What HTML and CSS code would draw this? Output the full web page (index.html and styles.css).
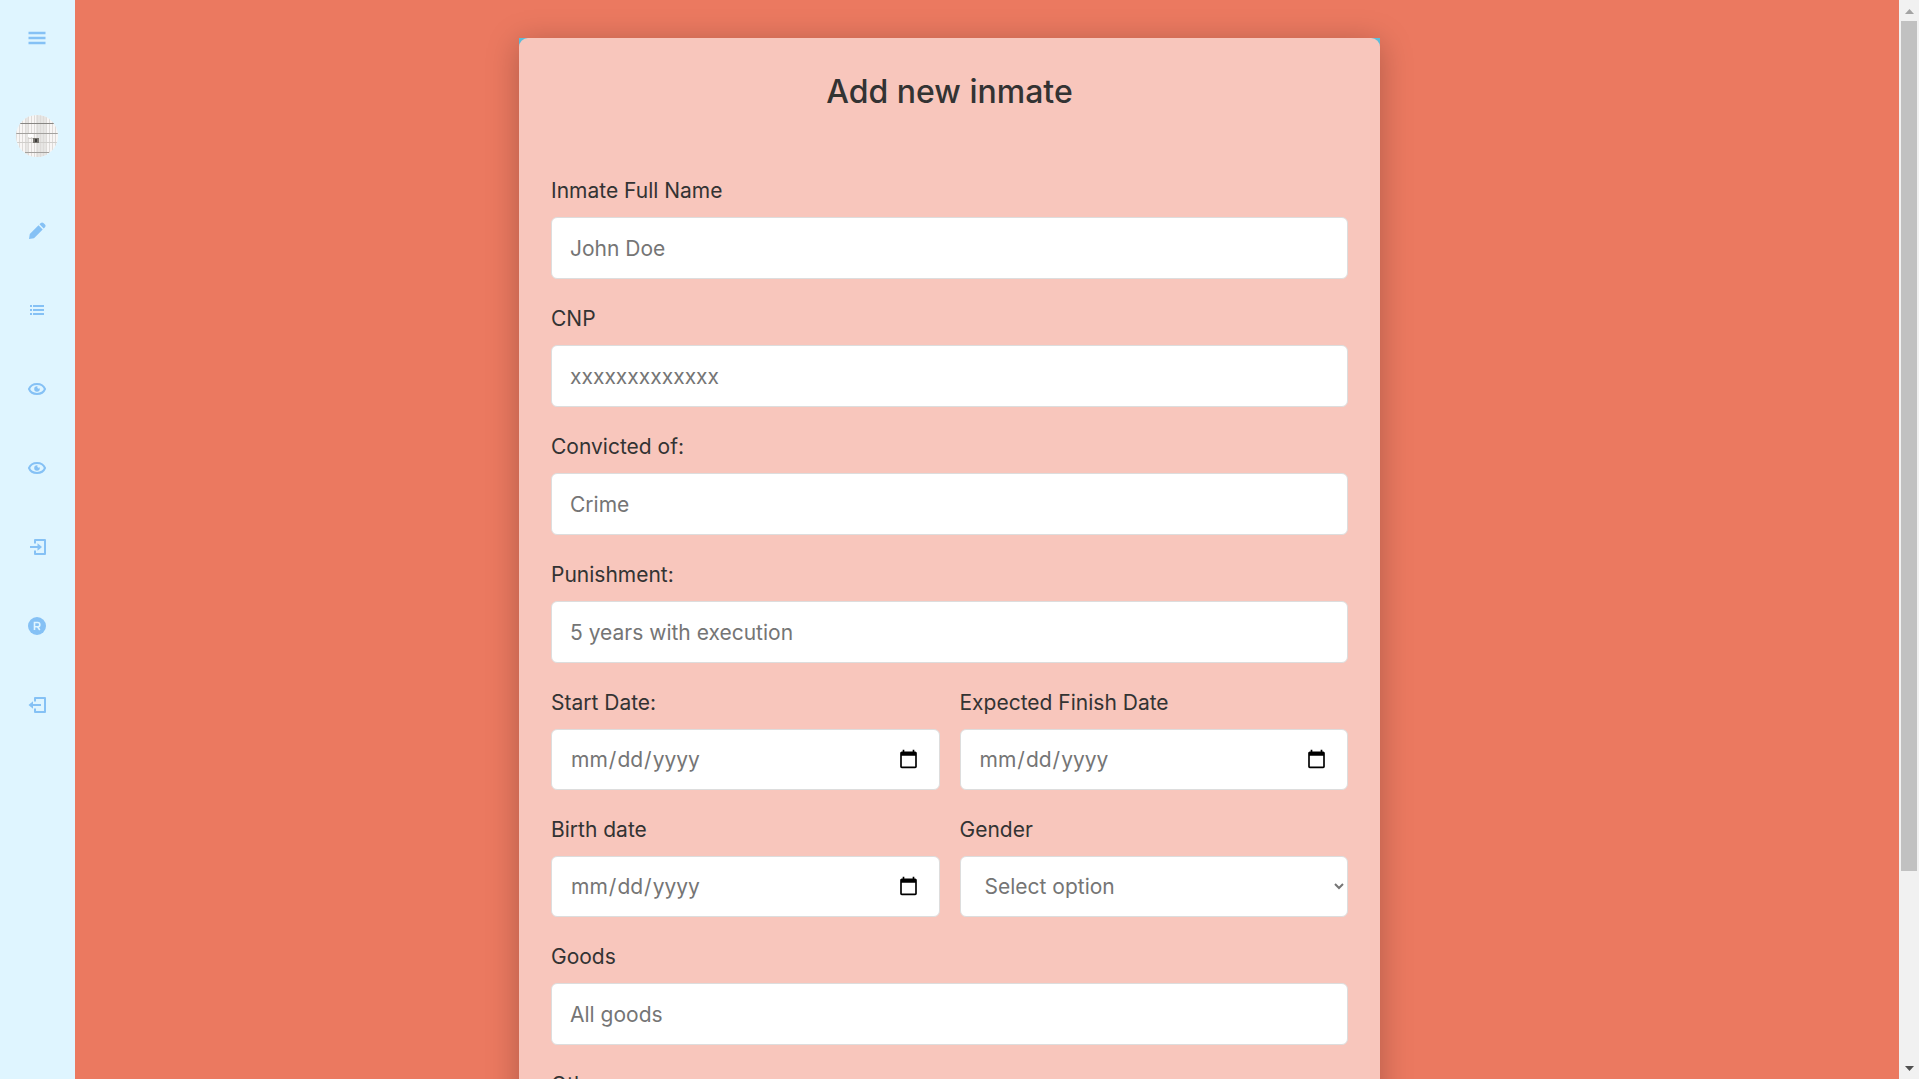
FILE: index.html
```html
<!DOCTYPE html>
<html lang="en-US">
<head>
<meta charset="utf-8">
<meta name="viewport" content="width=device-width, initial-scale=1">
<title>Add new inmate</title>
<link rel="stylesheet" href="styles.css">
</head>
<body>
<aside class="sidebar">
  <button class="icon-button" type="button" aria-label="Menu">
    <svg class="icon" viewBox="0 0 20 20"><path d="M1.5 5h17M1.500 10h17M1.500 15h17" fill="none" stroke="currentColor" stroke-width="2.500"/></svg>
  </button>
  <svg class="avatar" viewBox="0 0 42 42" role="img" aria-label="Profile picture">
    <defs>
      <clipPath id="round"><circle cx="21" cy="21" r="21"/></clipPath>
      <pattern id="bars" width="3" height="42" patternUnits="userSpaceOnUse"><path d="M.5 0v42" stroke="#dedbd9"/></pattern>
    </defs>
    <g clip-path="url(#round)">
      <path fill="#f8f6f5" d="M0 0h42v42H0z"/>
      <path fill="#e6e5e3" d="M10 0h3v42h-3zM20 0h11v42H20z"/>
      <path fill="url(#bars)" d="M0 0h42v42H0z"/>
      <path stroke="#888683" d="M0 8.500h42"/>
      <path stroke="#a3a19e" d="M0 18.500h42M9 37.500h24"/>
      <path stroke="#d0cecb" d="M0 27.500h42M12 23.500h6"/>
      <path fill="#fff" d="M12 19h5v3h-5z"/>
      <path fill="#77746f" d="M17 23h6v5h-6z"/>
      <path fill="#3d3b39" d="M19 24h2v3h-2z"/>
    </g>
  </svg>
  <nav class="nav">
    <a class="nav-link" href="#add" aria-label="Add inmate">
      <svg class="icon" viewBox="0 0 20 20"><path fill="currentColor" d="M2 18l.8-5L11.500 4.300l4.200 4.200L7 17.200zM12.500 3.300l1.300-1.300c.8-.8 1.800-.8 2.600 0l1.600 1.600c.8.800.8 1.800 0 2.600l-1.300 1.300z"/></svg>
    </a>
    <a class="nav-link" href="#list" aria-label="Inmate list">
      <svg class="icon" viewBox="0 0 20 20"><path fill="none" stroke="currentColor" stroke-width="2" d="M3 6h2M6 6h11M3 10h2M6 10h11M3 14h2M6 14h11"/></svg>
    </a>
    <a class="nav-link" href="#visits" aria-label="Visits">
      <svg class="icon" viewBox="0 0 20 20"><path fill="none" stroke="currentColor" stroke-width="2" d="M2 10c1.300-3.200 4.300-5 8-5s6.700 1.800 8 5c-1.300 3.200-4.300 5-8 5s-6.700-1.800-8-5z"/><path fill="currentColor" d="M10 7.200a2.800 2.800 0 1 0 2.800 2.800c0-.3 0-.5-.1-.7-.9.900-2.400.3-2.400-1 0-.4.100-.7.300-1-.2-.1-.4-.1-.6-.1z"/></svg>
    </a>
    <a class="nav-link" href="#visitors" aria-label="Visitors">
      <svg class="icon" viewBox="0 0 20 20"><path fill="none" stroke="currentColor" stroke-width="2" d="M2 10c1.300-3.200 4.300-5 8-5s6.700 1.800 8 5c-1.300 3.200-4.300 5-8 5s-6.700-1.800-8-5z"/><path fill="currentColor" d="M10 7.200a2.800 2.800 0 1 0 2.800 2.800c0-.3 0-.5-.1-.7-.9.900-2.400.3-2.400-1 0-.4.100-.7.300-1-.2-.1-.4-.1-.6-.1z"/></svg>
    </a>
    <a class="nav-link" href="#login" aria-label="Log in">
      <svg class="icon" viewBox="0 0 20 20"><path fill="none" stroke="currentColor" stroke-width="2" stroke-linejoin="round" d="M8 6.500V3h10v14H8v-3.500M3 10h9"/><path fill="currentColor" d="M10.500 6.200l4.500 3.800-4.500 3.800z"/></svg>
    </a>
    <a class="nav-link" href="#register" aria-label="Register">
      <svg class="icon" viewBox="0 0 20 20"><circle cx="10" cy="10" r="9" fill="currentColor"/><path fill="none" stroke="#dff5ff" stroke-width="1.600" d="M7.500 14V6.500h3.200a2 2 0 0 1 0 4.300H7.500M10.500 10.800l2.300 3.200"/></svg>
    </a>
    <a class="nav-link" href="#logout" aria-label="Log out">
      <svg class="icon" viewBox="0 0 20 20"><path fill="none" stroke="currentColor" stroke-width="2" stroke-linejoin="round" d="M8 6.500V3h10v14H8v-3.500M5 10h9"/><path fill="currentColor" d="M6 6.200L1.500 10 6 13.800z"/></svg>
    </a>
  </nav>
</aside>

<main class="content">
  <section class="card">
    <form class="form">
      <h1 class="title">Add new inmate</h1>
      <div class="field">
        <label class="label" for="name">Inmate Full Name</label>
        <input class="control" id="name" type="text" placeholder="John Doe">
      </div>
      <div class="field">
        <label class="label" for="cnp">CNP</label>
        <input class="control" id="cnp" type="text" placeholder="xxxxxxxxxxxxx">
      </div>
      <div class="field">
        <label class="label" for="crime">Convicted of:</label>
        <input class="control" id="crime" type="text" placeholder="Crime">
      </div>
      <div class="field">
        <label class="label" for="punishment">Punishment:</label>
        <input class="control" id="punishment" type="text" placeholder="5 years with execution">
      </div>
      <div class="pair">
        <div class="field">
          <label class="label" for="start">Start Date:</label>
          <input class="control control-picker" id="start" type="date">
        </div>
        <div class="field">
          <label class="label" for="finish">Expected Finish Date</label>
          <input class="control control-picker" id="finish" type="date">
        </div>
      </div>
      <div class="pair">
        <div class="field">
          <label class="label" for="birth">Birth date</label>
          <input class="control control-picker" id="birth" type="date">
        </div>
        <div class="field">
          <label class="label" for="gender">Gender</label>
          <select class="control control-picker control-select" id="gender">
            <option>Select option</option>
          </select>
        </div>
      </div>
      <div class="field">
        <label class="label" for="goods">Goods</label>
        <input class="control" id="goods" type="text" placeholder="All goods">
      </div>
      <div class="field">
        <label class="label" for="others">Others</label>
        <input class="control" id="others" type="text">
      </div>
    </form>
  </section>
</main>

<div class="scrollbar" aria-hidden="true">
  <svg class="scroll-arrow" viewBox="0 0 20 21"><path fill="#a3a3a3" d="M6 14l4.500-5 4.500 5z"/></svg>
  <div class="scroll-track"><div class="scroll-thumb"></div></div>
  <svg class="scroll-arrow" viewBox="0 0 20 21"><path fill="#505050" d="M6 8l4.500 5L15 8z"/></svg>
</div>
</body>
</html>
```
FILE: styles.css
```css
*,
*::before,
*::after {
  box-sizing: border-box;
}

body {
  margin: 0;
  height: 100vh;
  display: grid;
  grid-template-columns: 75px minmax(0, 1fr) 20px;
  overflow: hidden;
  background: #eb7960;
  color: #333;
  font-family: Inter, "Open Sans", sans-serif;
  font-size: 21px;
  line-height: 30px;
}

.sidebar {
  display: flex;
  flex-direction: column;
  align-items: center;
  padding: 28px 1px 0 0;
  background: #dff5ff;
  color: #85c1f5;
}

.icon-button {
  display: flex;
  padding: 0;
  border: 0;
  background: none;
  color: inherit;
}

.icon {
  display: block;
  width: 20px;
  height: 20px;
}

.avatar {
  width: 42px;
  height: 42px;
  margin: 67px 0 64px;
}

.nav {
  display: flex;
  flex-direction: column;
  gap: 59px;
}

.nav-link {
  color: inherit;
}

/* The right padding mirrors the sidebar, so the card is centred in the window. */
.content {
  min-height: 0;
  padding: 38px 75px 38px 0;
  overflow-y: auto;
  scrollbar-width: none;
}

.card {
  max-width: 861px;
  margin: 0 auto;
  background: #5bbcd9;
  box-shadow: 0 5px 30px rgba(0, 0, 0, 0.25);
}

.form {
  display: flex;
  flex-direction: column;
  gap: 25px;
  padding: 31px 32px;
  border-radius: 9px;
  background: #f8c6bc;
}

.title {
  margin: 0 0 36px;
  font-size: 32px;
  font-weight: 500;
  line-height: 46px;
  text-align: center;
}

.field {
  display: flex;
  flex-direction: column;
  gap: 11px;
}

.pair {
  display: grid;
  grid-template-columns: 1fr 1fr;
  gap: 20px;
}

.control {
  width: 100%;
  height: 62px;
  padding: 0 18px;
  border: 1px solid #ddd;
  border-radius: 6px;
  background: #fff;
  color: #757575;
  font: inherit;
}

.control::placeholder {
  color: #757575;
}

.control-picker {
  height: 61px;
}

.control-select {
  padding: 0 4px 0 20px;
}

.scrollbar {
  display: flex;
  flex-direction: column;
  background: #f1f1f1;
}

.scroll-arrow {
  flex: none;
  width: 20px;
  height: 21px;
}

.scroll-track {
  flex: 1;
  padding: 0 2px;
}

.scroll-thumb {
  height: 82%;
  background: #c1c1c1;
}
```
